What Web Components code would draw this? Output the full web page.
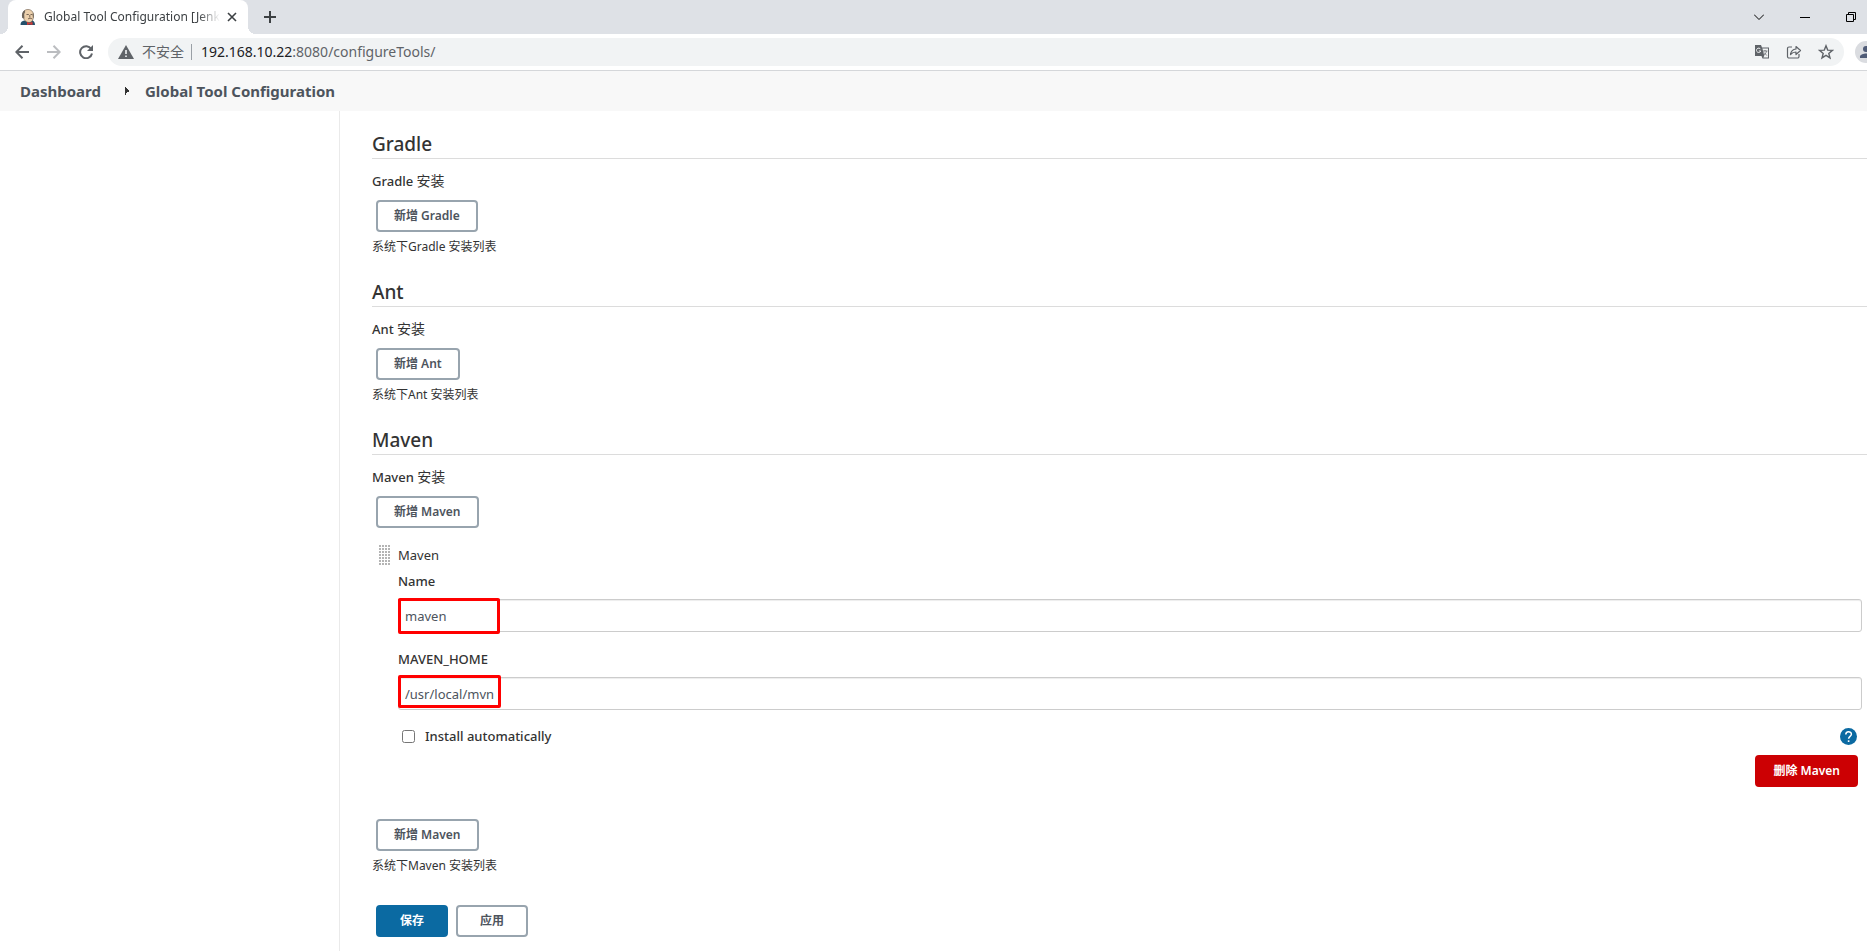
<!DOCTYPE html>
<html lang="zh-CN">
<head>
<meta charset="utf-8">
<title>Global Tool Configuration [Jenkins]</title>
<style>
  html, body { margin: 0; height: 100%; }
  body {
    display: flex;
    flex-direction: column;
    overflow: hidden;
    background: #fff;
    color: #333;
    font: 14px/20px "Noto Sans", "Noto Sans CJK SC", sans-serif;
  }
</style>
</head>
<body>

<browser-bar url-host="192.168.10.22" url-rest=":8080/configureTools/">Global Tool Configuration [Jenkins]</browser-bar>

<bread-crumbs>
  <a href="#dashboard">Dashboard</a>
  <a href="#tools">Global Tool Configuration</a>
</bread-crumbs>

<page-layout>
  <tool-section name="Gradle"></tool-section>
  <tool-section name="Ant"></tool-section>
  <tool-section name="Maven">
    <tool-installation name="Maven">
      <text-field label="Name" value="maven" mark="-1 102 36"></text-field>
      <text-field label="MAVEN_HOME" value="/usr/local/mvn" mark="-2 103 33"></text-field>
    </tool-installation>
  </tool-section>
  <form-actions></form-actions>
</page-layout>

<script>
(function () {
  'use strict';

  /* ============ shared ============ */
  const BASE = `
    * { box-sizing: border-box; }
    :host { display: block; }
    svg { display: block; flex: none; }
  `;

  function attach(el, css, html) {
    el.attachShadow({ mode: 'open' }).innerHTML = `<style>${BASE}${css}</style>${html}`;
  }

  /* ============ browser-bar ============ */
  class BrowserBar extends HTMLElement {
    connectedCallback() {
      attach(this, `
        :host { flex: none; border-bottom: 1px solid #d5d7da; color: #3c4043; }
        button { display: grid; place-items: center; padding: 0; border: 0; background: none; color: inherit; }
        .strip { display: flex; align-items: center; height: 34px; background: #dee1e6; padding-left: 8px; }
        .tab {
          position: relative; display: flex; align-items: center; align-self: stretch;
          width: 240px; padding: 0 8px 0 12px; background: #fff; border-radius: 8px 8px 0 0;
        }
        .tab::before, .tab::after {
          content: ""; position: absolute; bottom: 0; width: 8px; height: 8px;
        }
        .tab::before { right: 100%; background: radial-gradient(circle at 0 0, transparent 8px, #fff 8px); }
        .tab::after { left: 100%; background: radial-gradient(circle at 100% 0, transparent 8px, #fff 8px); }
        .title {
          flex: 1; min-width: 0; margin: 0 4px 0 8px; overflow: hidden; white-space: nowrap; font-size: 12px;
          -webkit-mask-image: linear-gradient(to right, #000 88%, transparent);
          mask-image: linear-gradient(to right, #000 88%, transparent);
        }
        .close { width: 16px; height: 16px; }
        .plus { width: 28px; height: 28px; margin-left: 8px; }
        .window { display: flex; margin: 0 -7px 0 auto; color: #000; }
        .window button { width: 46px; height: 28px; }
        .toolbar { display: flex; align-items: center; height: 36px; padding-left: 6px; color: #5f6368; }
        .nav { width: 32px; height: 28px; }
        .nav:disabled { color: #bbbdc0; }
        .address {
          flex: 1; display: flex; align-items: center; height: 28px; margin-left: 6px; padding: 0 2px 0 10px;
          border-radius: 14px; background: #f1f3f4;
        }
        .address > svg { margin-right: 8px; }
        .unsafe { padding-right: 7px; border-right: 1px solid #9aa0a6; line-height: 16px; }
        .url { flex: 1; padding-left: 9px; }
        .url b { font-weight: normal; color: #202124; }
        .address button { width: 32px; height: 28px; }
        .avatar {
          flex: none; width: 22px; height: 22px; margin-left: 11px; margin-right: -10px;
          border-radius: 50%; background: #dadce0; overflow: hidden; color: #4f5b76;
        }
      `, `
        <div class="strip">
          <div class="tab">
            <svg width="16" height="16" viewBox="0 0 16 16">
              <path d="M.5 16c0-3 1.500-4 4-4.500l6-.5c3 0 4.500 2 4.500 5z" fill="#24506b"/>
              <path d="M3 6c0-4 2-5.500 5-5.500S13.500 2.500 13.500 6.500 12 13.500 9 13.500 3 10.500 3 6z" fill="#ecd0ac" stroke="#6b5a4c" stroke-width=".6"/>
              <path d="M2.200 9c-.8-3.500 0-6.500 2.500-8l.5 2-1 2 .2 4.500z" fill="#6e655b"/>
              <path d="M13 3.500c1 1.500 1.200 4 .2 6l-.6-3z" fill="#766b5d"/>
              <path d="M6.500 5.500h2.300M10.500 5.500h2M9.800 6v2.500M8 10c1.300-1 3-1 4.200 0" fill="none" stroke="#5b4a3e" stroke-width=".8"/>
              <path d="M7 13l2.500 1 3-1.200V16l-3-.8L7 16z" fill="#d33833"/>
            </svg>
            <span class="title"><slot></slot></span>
            <button class="close" aria-label="Close tab">
              <svg width="10" height="10" viewBox="0 0 10 10"><path d="M1 1l8 8M9 1L1 9" stroke="currentColor" stroke-width="1.600"/></svg>
            </button>
          </div>
          <button class="plus" aria-label="New tab">
            <svg width="12" height="12" viewBox="0 0 12 12"><path d="M6 0v12M0 6h12" stroke="currentColor" stroke-width="2"/></svg>
          </button>
          <div class="window">
            <button aria-label="Search tabs"><svg width="10" height="6" viewBox="0 0 10 6"><path d="M0 .5l5 5 5-5" fill="none" stroke="currentColor"/></svg></button>
            <button aria-label="Minimize"><svg width="10" height="1" viewBox="0 0 10 1"><path d="M0 0h10v1H0z"/></svg></button>
            <button aria-label="Restore"><svg width="10" height="10" viewBox="0 0 10 10"><path d="M.5 2.500h7v7h-7zM2.500 2.500v-2h7v7h-2" fill="none" stroke="currentColor"/></svg></button>
          </div>
        </div>
        <div class="toolbar">
          <button class="nav" aria-label="Back"><svg width="14" height="14" viewBox="0 0 14 14"><path d="M14 7H1.500M7.500.8L1.300 7l6.200 6.200" fill="none" stroke="currentColor" stroke-width="2"/></svg></button>
          <button class="nav" aria-label="Forward" disabled><svg width="14" height="14" viewBox="0 0 14 14"><path d="M0 7h12.500M6.500.8L12.700 7l-6.200 6.200" fill="none" stroke="currentColor" stroke-width="2"/></svg></button>
          <button class="nav" aria-label="Reload"><svg width="14" height="14" viewBox="0 0 14 14"><path d="M12.200 4A6 6 0 1 0 13 8.500" fill="none" stroke="currentColor" stroke-width="2"/><path d="M14 0v6H8z" fill="currentColor"/></svg></button>
          <div class="address">
            <svg width="16" height="14" viewBox="0 0 16 14"><path d="M8 0l8 14H0z" fill="currentColor"/><path d="M7.200 5h1.600v4H7.200zM7.200 10.500h1.600V12H7.200z" fill="#f1f3f4"/></svg>
            <span class="unsafe">不安全</span>
            <span class="url"><b>${this.getAttribute('url-host')}</b>${this.getAttribute('url-rest')}</span>
            <button aria-label="Translate">
              <svg width="16" height="16" viewBox="0 0 16 16">
                <path d="M1 1h6l1 2.500h7v11H8.500L7.500 12H1z" fill="currentColor"/>
                <path d="M8.400 4.500H14v9H9.300l1-1.800z" fill="#f1f3f4"/>
                <path d="M6.600 5.200A2.200 2.200 0 1 0 6.800 7H4.800" fill="none" stroke="#f1f3f4"/>
                <path d="M9 7h4.500M11 6v1M12.500 7.200c-.5 2-1.500 3-2.600 3.800M10 8.500l2.800 3" fill="none" stroke="currentColor" stroke-width=".8"/>
              </svg>
            </button>
            <button aria-label="Share">
              <svg width="16" height="16" viewBox="0 0 16 16" fill="none" stroke="currentColor" stroke-width="1.200">
                <path d="M6 3H3a1.500 1.500 0 0 0-1.500 1.500v8A1.500 1.500 0 0 0 3 14h8.500a1.500 1.500 0 0 0 1.500-1.500V10"/>
                <path d="M4.500 10.500C5 7 7 5.200 10 5V2.500l4.500 4-4.500 4V8C7.500 8 6 8.800 4.500 10.500z" stroke-linejoin="round"/>
              </svg>
            </button>
            <button aria-label="Bookmark">
              <svg width="16" height="16" viewBox="0 0 16 16"><path d="M8 1.800l1.700 4.300 4.700.3-3.600 3 1.200 4.500L8 11.400l-4 2.500 1.200-4.500-3.600-3 4.700-.3z" fill="none" stroke="currentColor" stroke-width="1.400"/></svg>
            </button>
          </div>
          <button class="avatar" aria-label="Profile">
            <svg width="22" height="22" viewBox="0 0 22 22" fill="currentColor"><circle cx="11" cy="8" r="3"/><path d="M5 17v-1.500c0-2 4-3 6-3s6 1 6 3V17z"/></svg>
          </button>
        </div>
      `);
    }
  }

  /* ============ bread-crumbs ============ */
  class BreadCrumbs extends HTMLElement {
    connectedCallback() {
      attach(this, `
        :host { flex: none; background: #f8f8f8; font-size: 15px; }
        nav { display: flex; align-items: center; height: 40px; padding: 0 20px; gap: 44px; }
        ::slotted(a) { color: #4d545d; font-weight: bold; text-decoration: none; }
        ::slotted(a:not(:first-child)) {
          margin-left: -20px; padding-left: 20px;
          background: conic-gradient(from 225deg at 4px 50%, #333 90deg, transparent 0) 0 center / 4px 8px no-repeat;
        }
      `, `<nav aria-label="Breadcrumb"><slot></slot></nav>`);
    }
  }

  /* ============ page-layout ============ */
  class PageLayout extends HTMLElement {
    connectedCallback() {
      attach(this, `
        :host { flex: 1; display: flex; min-height: 0; }
        aside { flex: none; width: 340px; border-right: 1px solid #eaeaea; }
        main { flex: 1; min-width: 0; padding: 21px 0 0 32px; }
      `, `<aside></aside><main><slot></slot></main>`);
    }
  }

  /* ============ tool-button ============ */
  class ToolButton extends HTMLElement {
    connectedCallback() {
      attach(this, `
        :host { display: inline-block; vertical-align: top; }
        button {
          display: block; height: 32px; padding: 0 16px; border: 2px solid #98a4ae; border-radius: 4px;
          background: #fff; color: #4d545d; font: 600 12px/16px "Noto Sans", "Noto Sans CJK SC", sans-serif;
        }
        :host([wide]) button { min-width: 72px; }
        :host([kind=primary]) button { background: #0b6aa2; border-color: #0b6aa2; color: #fff; }
        :host([kind=danger]) button { background: #cc0003; border-color: #cc0003; color: #fff; }
      `, `<button type="button"><slot></slot></button>`);
    }
  }

  /* ============ tool-section ============ */
  class ToolSection extends HTMLElement {
    connectedCallback() {
      const name = this.getAttribute('name');
      const add = `<tool-button>新增 ${name}</tool-button>`;
      attach(this, `
        :host { margin-bottom: 20px; }
        h2 {
          margin: 0; height: 27px; border-bottom: 1px solid #dcdcdc;
          font-size: 19px; line-height: 24px; font-weight: 500;
        }
        .label { padding-top: 12px; height: 41px; font-weight: 500; font-size: 13px; }
        .label span { font-size: 14px; font-weight: 400; }
        .add { padding-left: 4px; height: 32px; }
        .note { height: 28px; padding-top: 5px; font-size: 12px; line-height: 20px; }
      `, `
        <h2>${name}</h2>
        <div class="label">${name} <span>安装</span></div>
        <div class="add">${add}</div>
        <slot></slot>
        ${this.children.length ? `<div class="add">${add}</div>` : ''}
        <div class="note">系统下${name} 安装列表</div>
      `);
    }
  }

  /* ============ tool-installation ============ */
  class ToolInstallation extends HTMLElement {
    connectedCallback() {
      attach(this, `
        :host { padding: 17px 5px 32px 7px; font-size: 13px; }
        header { display: flex; align-items: center; gap: 7px; height: 20px; }
        .grip {
          width: 12px; height: 20px;
          background: radial-gradient(circle at 1px 1px, #b4b4b4 1px, transparent 1px) 0 0 / 3px 3px;
        }
        .body { padding-left: 19px; }
        .auto { display: flex; align-items: center; height: 20px; margin-top: 16px; padding: 0 5px 0 4px; }
        input { width: 13px; height: 13px; margin: 0 10px 0 0; }
        label { flex: 1; font-weight: 500; }
        a { display: block; }
        .remove { display: flex; justify-content: flex-end; margin-top: 9px; padding-right: 4px; }
      `, `
        <header><span class="grip"></span>${this.getAttribute('name')}</header>
        <div class="body">
          <slot></slot>
          <div class="auto">
            <input type="checkbox" id="auto">
            <label for="auto">Install automatically</label>
            <a href="#help" aria-label="Help">
              <svg width="17" height="17" viewBox="0 0 17 17">
                <circle cx="8.500" cy="8.500" r="8.500" fill="#0b6aa2"/>
                <path d="M5.800 6.600c0-3.800 5.600-3.600 5.600-.3 0 2-2.800 2.200-2.800 4.400" fill="none" stroke="#fff" stroke-width="1.500"/>
                <path d="M7.800 12.300h1.600v1.700H7.800z" fill="#fff"/>
              </svg>
            </a>
          </div>
          <div class="remove"><tool-button kind="danger">删除 ${this.getAttribute('name')}</tool-button></div>
        </div>
      `);
    }
  }

  /* ============ text-field ============ */
  class TextField extends HTMLElement {
    connectedCallback() {
      // mark = "top width height" of the red frame drawn over the value
      const [top, width, height] = this.getAttribute('mark').split(' ');
      attach(this, `
        :host { margin-bottom: 11px; }
        label { display: block; padding: 6px 0 8px; font-weight: 500; }
        .box { position: relative; }
        input {
          display: block; width: 100%; height: 33px; padding: 0 6px; border: 1px solid #ccc; border-radius: 3px;
          background: #fff; box-shadow: inset 0 1px 1px rgba(0, 0, 0, .075);
          color: #4d545d; font: 13px/20px "Noto Sans", "Noto Sans CJK SC", sans-serif;
        }
        .mark {
          position: absolute; left: 0; top: ${top}px; width: ${width}px; height: ${height}px;
          border: 3px solid #f00; border-radius: 2px; pointer-events: none;
        }
      `, `
        <label for="field">${this.getAttribute('label')}</label>
        <div class="box">
          <input type="text" id="field" value="${this.getAttribute('value')}">
          <span class="mark"></span>
        </div>
      `);
    }
  }

  /* ============ form-actions ============ */
  class FormActions extends HTMLElement {
    connectedCallback() {
      attach(this, `
        :host { display: flex; gap: 8px; padding: 6px 4px; }
      `, `
        <tool-button kind="primary" wide>保存</tool-button>
        <tool-button wide>应用</tool-button>
      `);
    }
  }

  customElements.define('browser-bar', BrowserBar);
  customElements.define('bread-crumbs', BreadCrumbs);
  customElements.define('page-layout', PageLayout);
  customElements.define('tool-button', ToolButton);
  customElements.define('tool-section', ToolSection);
  customElements.define('tool-installation', ToolInstallation);
  customElements.define('text-field', TextField);
  customElements.define('form-actions', FormActions);
})();
</script>
</body>
</html>
